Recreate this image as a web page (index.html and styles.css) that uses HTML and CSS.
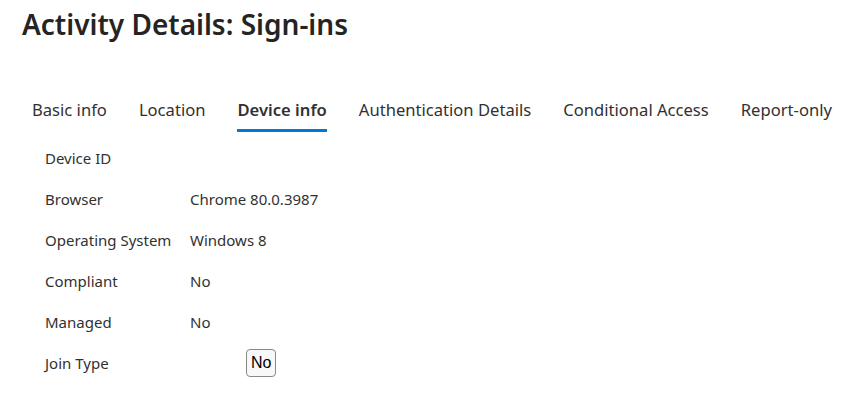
FILE: index.html
```html
<!DOCTYPE html>
<html lang="en">
<head>
    <meta charset="UTF-8">
    <meta name="viewport" content="width=device-width, initial-scale=1.0">
    <title>Activity Details: Sign-ins</title>
    <link rel="stylesheet" href="styles.css">
</head>
<body>
    <div class="panel">
        <h1 class="title">Activity Details: Sign-ins</h1>

        <div class="tabs">
            <div class="tab">Basic info</div>
            <div class="tab">Location</div>
            <div class="tab active">Device info</div>
            <div class="tab">Authentication Details</div>
            <div class="tab">Conditional Access</div>
            <div class="tab">Report-only</div>
        </div>

        <div class="details">
            <div class="label">Device ID</div>
            <div class="value"></div>

            <div class="label">Browser</div>
            <div class="value">Chrome 80.0.3987</div>

            <div class="label">Operating System</div>
            <div class="value">Windows 8</div>

            <div class="label">Compliant</div>
            <div class="value">No</div>

            <div class="label">Managed</div>
            <div class="value">No</div>

            <div class="label">Join Type</div>
            <div class="value"><span class="chip">No</span></div>
        </div>
    </div>
</body>
</html>
```

FILE: styles.css
```css
html {
    background-color: #ffffff;
}

body {
    margin: 0;
    font-family: "Noto Sans", "Open Sans", sans-serif;
    color: #323130;
}

.panel {
    padding: 4px 0 0 22px;
}

.title {
    margin: 0;
    font-size: 28px;
    font-weight: 600;
    line-height: 40px;
    color: #252423;
}

.tabs {
    display: flex;
    gap: 32px;
    margin-top: 54px;
    padding-left: 10px;
}

.tab {
    font-size: 16.6px;
    line-height: 24px;
    padding-bottom: 7px;
    border-bottom: 3px solid transparent;
    white-space: nowrap;
}

.tab.active {
    font-weight: 600;
    border-bottom-color: #0078d4;
}

.details {
    display: grid;
    grid-template-columns: 145px 1fr;
    grid-auto-rows: 41px;
    align-items: center;
    padding-left: 23px;
    margin-top: 5px;
    font-size: 15px;
}

.chip {
    display: inline-block;
    margin-left: 56px;
    padding: 4px 4px;
    border: 1px solid #8a8886;
    border-radius: 4px;
    background: #f8f8f8;
    font-family: "Liberation Sans", Arial, sans-serif;
    font-size: 16px;
    line-height: 18px;
    color: #000;
}
```
